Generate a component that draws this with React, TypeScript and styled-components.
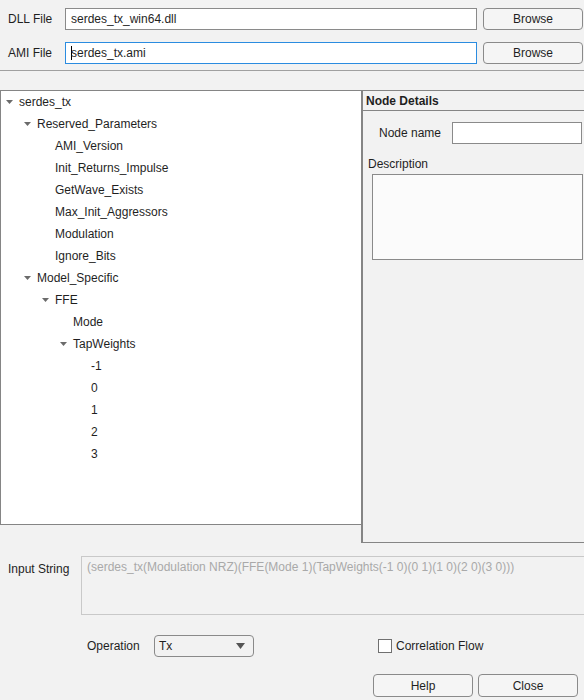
import React from "react"
import styled, { createGlobalStyle } from "styled-components"

const GlobalStyle = createGlobalStyle`
  html, body {
    margin: 0;
    padding: 0;
    background: #f2f2f2;
    overflow: hidden;
  }
  * {
    box-sizing: border-box;
  }
`

const Page = styled.div`
  width: 584px;
  height: 700px;
  overflow: hidden;
  background: #f2f2f2;
  font-family: "Liberation Sans", Arial, sans-serif;
  font-size: 12px;
  color: #1f1f1f;
  display: flex;
  flex-direction: column;
`

const FileRow = styled.div`
  display: flex;
  align-items: center;
  height: 22px;
  margin-top: ${(p: { $top: number }) => p.$top}px;
`

const RowLabel = styled.div`
  width: 65px;
  flex-shrink: 0;
  padding-left: 8px;
`

const TextInput = styled.div<{ $focus?: boolean }>`
  width: 412px;
  flex-shrink: 0;
  height: 22px;
  background: #fff;
  border: 1px solid ${(p) => (p.$focus ? "#2b8ce0" : "#8a8a8a")};
  padding-left: 5px;
  display: flex;
  align-items: center;
  white-space: nowrap;
`

const Caret = styled.span`
  display: inline-block;
  width: 1px;
  height: 14px;
  background: #000;
  margin-right: -1px;
`

const Button = styled.div<{ $w?: number; $h?: number }>`
  width: ${(p) => p.$w ?? 100}px;
  height: ${(p) => p.$h ?? 23}px;
  flex-shrink: 0;
  border: 1px solid #8a8a8a;
  border-radius: 4px;
  background: #f5f5f5;
  display: flex;
  align-items: center;
  justify-content: center;
`

const Divider = styled.div`
  margin-top: 6px;
  height: 1px;
  background: #a0a0a0;
`

const Main = styled.div`
  display: flex;
  align-items: flex-start;
  margin-top: 19px;
  width: 584px;
  overflow: hidden;
`

const TreePanel = styled.div`
  width: 362px;
  height: 435px;
  flex-shrink: 0;
  background: #fff;
  border: 1px solid #858585;
`

const TreeRow = styled.div<{ $level: number }>`
  height: 22px;
  display: flex;
  align-items: center;
  padding-left: ${(p) => p.$level * 18 + 5}px;
  white-space: nowrap;
`

const Toggle = styled.span`
  width: 13px;
  display: flex;
  align-items: center;
`

const DetailsPanel = styled.div`
  width: 240px;
  height: 453px;
  flex-shrink: 0;
  border: 1px solid #858585;
  border-left-width: 2px;
  margin-left: -1px;
  background: #f2f2f2;
`

const DetailsHeader = styled.div`
  height: 20px;
  border-bottom: 1px solid #858585;
  font-weight: bold;
  padding-left: 3px;
  display: flex;
  align-items: center;
`

const NameRow = styled.div`
  display: flex;
  align-items: center;
  margin-top: 11px;
  padding-left: 16px;
`

const NameInput = styled.div`
  width: 130px;
  height: 22px;
  background: #fff;
  border: 1px solid #8a8a8a;
  margin-left: 11px;
`

const DescLabel = styled.div`
  margin-top: 13px;
  padding-left: 5px;
`

const DescBox = styled.div`
  width: 211px;
  height: 86px;
  margin-top: 3px;
  margin-left: 9px;
  background: #fbfbfb;
  border: 1px solid #8a8a8a;
`

const InputStringRow = styled.div`
  display: flex;
  align-items: flex-start;
  margin-top: 13px;
`

const InputStringLabel = styled.div`
  width: 81px;
  flex-shrink: 0;
  padding-left: 8px;
  padding-top: 6px;
`

const InputStringBox = styled.div`
  width: 520px;
  height: 59px;
  flex-shrink: 0;
  border: 1px solid #c9c9c9;
  color: #a9a9a9;
  padding: 3px 5px;
  white-space: nowrap;
`

const OptionsRow = styled.div`
  display: flex;
  align-items: center;
  margin-top: 20px;
  height: 22px;
`

const OptionLabel = styled.div`
  width: 154px;
  flex-shrink: 0;
  padding-left: 87px;
`

const Select = styled.div`
  width: 100px;
  height: 22px;
  border: 1px solid #8a8a8a;
  border-radius: 4px;
  display: flex;
  align-items: center;
  justify-content: space-between;
  padding: 0 8px 0 4px;
`

const Check = styled.span`
  width: 14px;
  height: 14px;
  background: #fff;
  border: 1px solid #707070;
  margin-left: 124px;
  margin-right: 4px;
`

const ButtonRow = styled.div`
  display: flex;
  gap: 5px;
  margin-top: 17px;
  padding-left: 373px;
`

type Node = { label: string; children?: Node[] }

const tree: Node = {
  label: "serdes_tx",
  children: [
    {
      label: "Reserved_Parameters",
      children: [
        { label: "AMI_Version" },
        { label: "Init_Returns_Impulse" },
        { label: "GetWave_Exists" },
        { label: "Max_Init_Aggressors" },
        { label: "Modulation" },
        { label: "Ignore_Bits" },
      ],
    },
    {
      label: "Model_Specific",
      children: [
        {
          label: "FFE",
          children: [
            { label: "Mode" },
            {
              label: "TapWeights",
              children: ["-1", "0", "1", "2", "3"].map((l) => ({ label: l })),
            },
          ],
        },
      ],
    },
  ],
}

const Arrow = ({ w, h, color }: { w: number; h: number; color: string }) => (
  <svg width={w} height={h} viewBox={`0 0 ${w} ${h}`}>
    <polygon points={`0,0 ${w},0 ${w / 2},${h}`} fill={color} />
  </svg>
)

const renderTree = (node: Node, level: number): React.ReactNode[] => {
  const rows: React.ReactNode[] = [
    <TreeRow key={`${level}-${node.label}`} $level={level}>
      <Toggle>{node.children && <Arrow w={7} h={4} color="#6b6b6b" />}</Toggle>
      {node.label}
    </TreeRow>,
  ]
  node.children?.forEach((c) => rows.push(...renderTree(c, level + 1)))
  return rows
}

export default function App() {
  return (
    <Page>
      <GlobalStyle />
      <FileRow $top={8}>
        <RowLabel>DLL File</RowLabel>
        <TextInput>serdes_tx_win64.dll</TextInput>
        <Button style={{ marginLeft: 6 }} $h={22}>Browse</Button>
      </FileRow>
      <FileRow $top={12}>
        <RowLabel>AMI File</RowLabel>
        <TextInput $focus>
          <Caret />
          serdes_tx.ami
        </TextInput>
        <Button style={{ marginLeft: 6 }} $h={22}>Browse</Button>
      </FileRow>
      <Divider />
      <Main>
        <TreePanel>{renderTree(tree, 0)}</TreePanel>
        <DetailsPanel>
          <DetailsHeader>Node Details</DetailsHeader>
          <NameRow>
            Node name
            <NameInput />
          </NameRow>
          <DescLabel>Description</DescLabel>
          <DescBox />
        </DetailsPanel>
      </Main>
      <InputStringRow>
        <InputStringLabel>Input String</InputStringLabel>
        <InputStringBox>
          (serdes_tx(Modulation NRZ)(FFE(Mode 1)(TapWeights(-1 0)(0 1)(1 0)(2 0)(3 0)))
        </InputStringBox>
      </InputStringRow>
      <OptionsRow>
        <OptionLabel>Operation</OptionLabel>
        <Select>
          Tx
          <Arrow w={9} h={6} color="#555" />
        </Select>
        <Check />
        Correlation Flow
      </OptionsRow>
      <ButtonRow>
        <Button>Help</Button>
        <Button>Close</Button>
      </ButtonRow>
    </Page>
  )
}
